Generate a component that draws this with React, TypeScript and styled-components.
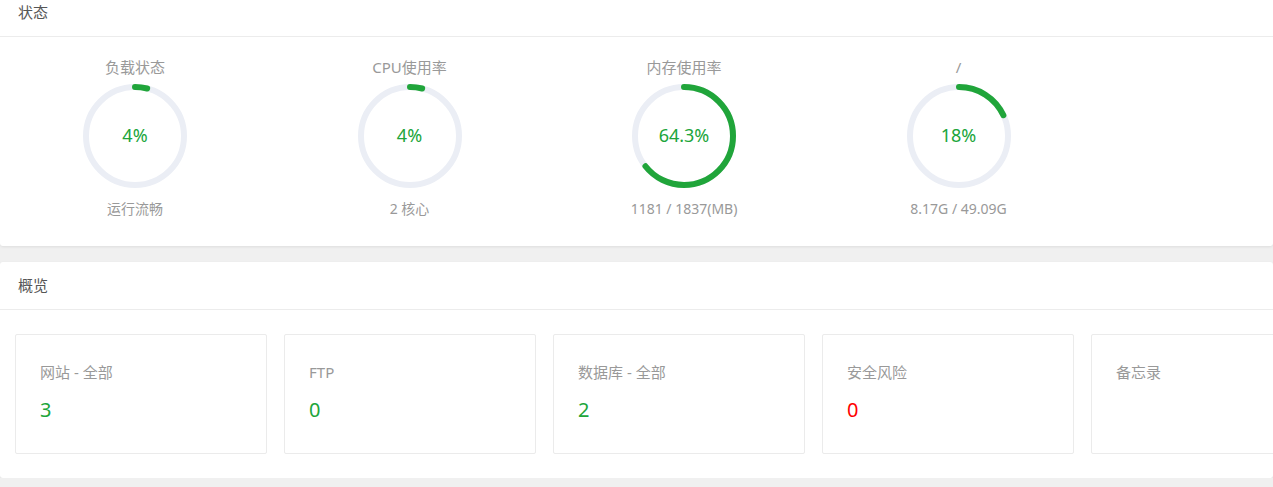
import React from "react";
import styled, { createGlobalStyle } from "styled-components";

const GlobalStyle = createGlobalStyle`
  html, body { margin: 0; padding: 0; background: #f0f0f0; }
  body { font-family: "Noto Sans", "Noto Sans CJK SC", "Liberation Sans", sans-serif; overflow: hidden; }
  * { box-sizing: border-box; }
`;

const Page = styled.div`
  display: flex;
  flex-direction: column;
  gap: 16px;
  margin-top: -11px;
`;

const Panel = styled.section`
  background: #fff;
  border-radius: 3px;
  box-shadow: 0 1px 3px rgba(0, 0, 0, 0.08);
`;

const PanelHeader = styled.div`
  height: 48px;
  line-height: 47px;
  padding-left: 18px;
  font-size: 15px;
  color: #555;
  border-bottom: 1px solid #ececec;
`;

const GaugeRow = styled.div`
  display: flex;
  padding: 20px 0 27px;
`;

const GaugeItem = styled.div`
  flex: 0 0 274.5px;
  padding-right: 4.5px;
  display: flex;
  flex-direction: column;
  align-items: center;
`;

const GaugeTitle = styled.div`
  font-size: 15px;
  line-height: 20px;
  color: #999;
  height: 20px;
`;

const GaugeWrap = styled.div`
  position: relative;
  width: 104px;
  height: 104px;
  margin-top: 7px;
`;

const GaugeValue = styled.div`
  position: absolute;
  inset: 0;
  display: flex;
  align-items: center;
  justify-content: center;
  font-size: 18px;
  color: #20a53a;
  padding-bottom: 2px;
`;

const GaugeFoot = styled.div`
  margin-top: 11px;
  font-size: 14px;
  line-height: 20px;
  color: #999;
`;

const CardRow = styled.div`
  display: flex;
  gap: 17px;
  padding: 24px 0 24px 15px;
  overflow: hidden;
`;

const Card = styled.div`
  flex: 0 0 252px;
  height: 120px;
  border: 1px solid #ebebeb;
  border-radius: 2px;
  padding: 27px 24px 0;
`;

const CardTitle = styled.div`
  font-size: 15px;
  line-height: 20px;
  color: #999;
`;

const CardValue = styled.div<{ $danger?: boolean }>`
  margin-top: 15px;
  font-size: 20px;
  line-height: 26px;
  color: ${(p) => (p.$danger ? "#ff0000" : "#20a53a")};
`;

const R = 49;
const C = 2 * Math.PI * R;

function Gauge({ title, value, pct, foot }: { title: string; value: string; pct: number; foot: string }) {
  const len = (C * pct) / 100;
  return (
    <GaugeItem>
      <GaugeTitle>{title}</GaugeTitle>
      <GaugeWrap>
        <svg width="104" height="104" viewBox="0 0 104 104">
          <circle cx="52" cy="52" r={R} fill="none" stroke="#ebeef5" strokeWidth="6" />
          <circle
            cx="52"
            cy="52"
            r={R}
            fill="none"
            stroke="#20a53a"
            strokeWidth="6"
            strokeLinecap="round"
            strokeDasharray={`${len} ${C}`}
            transform="rotate(-90 52 52)"
          />
        </svg>
        <GaugeValue>{value}</GaugeValue>
      </GaugeWrap>
      <GaugeFoot>{foot}</GaugeFoot>
    </GaugeItem>
  );
}

const cards = [
  { title: "网站 - 全部", value: "3" },
  { title: "FTP", value: "0" },
  { title: "数据库 - 全部", value: "2" },
  { title: "安全风险", value: "0", danger: true },
  { title: "备忘录", value: "" },
];

export default function App() {
  return (
    <>
      <GlobalStyle />
      <Page>
        <Panel>
          <PanelHeader>状态</PanelHeader>
          <GaugeRow>
            <Gauge title="负载状态" value="4%" pct={4} foot="运行流畅" />
            <Gauge title="CPU使用率" value="4%" pct={4} foot="2 核心" />
            <Gauge title="内存使用率" value="64.3%" pct={64.3} foot="1181 / 1837(MB)" />
            <Gauge title="/" value="18%" pct={18} foot="8.17G / 49.09G" />
          </GaugeRow>
        </Panel>
        <Panel>
          <PanelHeader>概览</PanelHeader>
          <CardRow>
            {cards.map((c) => (
              <Card key={c.title}>
                <CardTitle>{c.title}</CardTitle>
                {c.value && <CardValue $danger={c.danger}>{c.value}</CardValue>}
              </Card>
            ))}
          </CardRow>
        </Panel>
      </Page>
    </>
  );
}
